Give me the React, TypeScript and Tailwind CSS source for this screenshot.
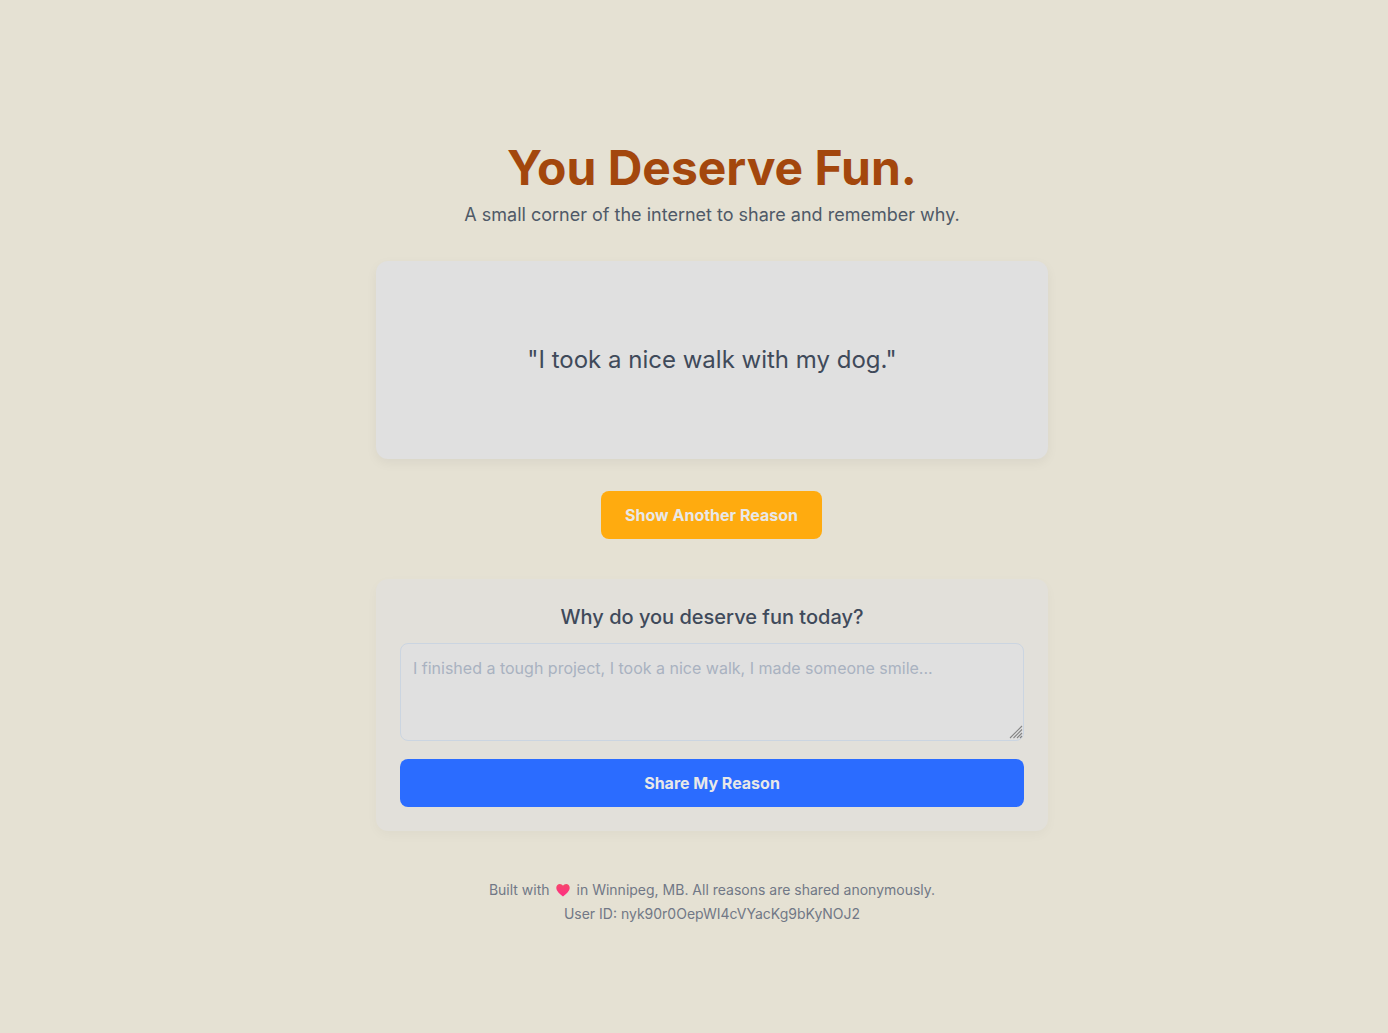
import React from 'react';

const App: React.FC = () => {
  return (
    <div className="min-h-screen bg-[#e5e1d3] flex items-center justify-center pl-[52px] pr-4 pt-[53px] pb-4 font-['Inter',sans-serif]">
      <div className="w-full max-w-[672px] text-center">
        <header className="mb-[32.5px]">
          <h1 className="text-5xl font-bold text-[#a3470d] mb-[8.5px]">You Deserve Fun.</h1>
          <p className="text-lg text-[#4f5967]">A small corner of the internet to share and remember why.</p>
        </header>
        <main>
          <div className="bg-[#e0e0e0] rounded-xl shadow-[0_4px_12px_rgba(0,0,0,0.05)] h-[198px] flex items-center justify-center p-8 mb-8">
            <p className="text-2xl text-[#3f4a5a]">"I took a nice walk with my dog."</p>
          </div>
          <button className="bg-[#ffab0f] text-[#e8e8e8] font-bold text-base w-[221px] -ml-[1px] py-3 rounded-lg mb-10">
            Show Another Reason
          </button>
          <div className="bg-[#e2e0da] rounded-xl shadow-[0_4px_12px_rgba(0,0,0,0.03)] p-6">
            <h2 className="text-xl font-medium text-[#3f4a5a] mb-3">Why do you deserve fun today?</h2>
            <div className="relative mb-[18px]">
              <textarea
                rows={3}
                className="w-full block resize-none bg-[#e0e0e0] border border-[#cbd5e1] rounded-lg px-3 py-3 text-base placeholder:text-[#a9b2c0]"
                placeholder="I finished a tough project, I took a nice walk, I made someone smile..."
              />
              <svg className="absolute right-[1px] bottom-[2px] w-[14px] h-[14px] text-[#858585]" viewBox="0 0 14 14" fill="none" stroke="currentColor" strokeWidth="1.1">
                <path d="M1 13 13 1M4.500 13 13 4.500M8 13l5-5M11 13l2-2" />
              </svg>
            </div>
            <button className="w-full bg-[#2b6cff] text-[#e8e8e8] font-bold text-base py-3 rounded-lg">Share My Reason</button>
          </div>
        </main>
        <footer className="mt-[47px] text-sm text-[#717886] leading-6">
          <p className="flex items-center justify-center gap-[6.5px]">
            <span>Built with</span>
            <svg className="w-[14px] h-[14px]" viewBox="0 0 24 24">
              <defs>
                <linearGradient id="heart" x1="0" y1="0" x2="0" y2="1">
                  <stop offset="0" stopColor="#f5486a" />
                  <stop offset="1" stopColor="#ff2d85" />
                </linearGradient>
              </defs>
              <path fill="url(#heart)" d="M12 23C6.500 18.500 0.500 14 0.500 8 0.500 4 3.400 1.500 6.600 1.500c2.200 0 4.200 1.200 5.400 3.200 1.200-2 3.200-3.200 5.400-3.200 3.200 0 6.100 2.500 6.100 6.500 0 6-6 10.500-11.500 15z" />
            </svg>
            <span>in Winnipeg, MB. All reasons are shared anonymously.</span>
          </p>
          <p>User ID: nyk90r0OepWI4cVYacKg9bKyNOJ2</p>
        </footer>
      </div>
    </div>
  );
};

export default App;
